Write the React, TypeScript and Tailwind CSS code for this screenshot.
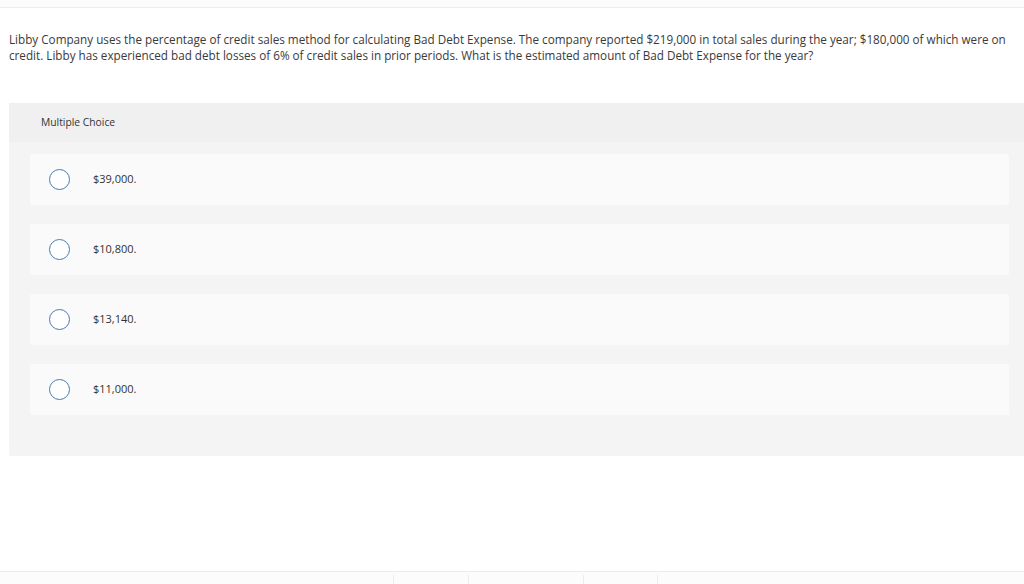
const options = ["$39,000.", "$10,800.", "$13,140.", "$11,000."];

export default function App() {
  return (
    <div
      className="flex h-[584px] w-[1024px] flex-col overflow-hidden bg-white text-[#333]"
      style={{ fontFamily: "'Open Sans', Lato, sans-serif" }}
    >
      {/* top strip */}
      <div className="h-[8px] border-b border-[#ececec] bg-[#fcfcfc]" />

      {/* question */}
      <p className="ml-[9px] mr-[4px] mt-[23px] text-[11.7px] leading-[16px] text-[#3a3a3a]">
        Libby Company uses the percentage of credit sales method for calculating Bad Debt Expense. The company reported $219,000 in total sales during the year; $180,000 of which were on credit. Libby has experienced bad debt losses of 6% of credit sales in prior periods. What is the estimated amount of Bad Debt Expense for the year?
      </p>

      {/* answer panel */}
      <div className="ml-[9px] mt-[40px] flex h-[353px] flex-col rounded-l-[2px] bg-[#f4f4f4]">
        <div className="flex h-[39px] items-center bg-[#f0f0f0] pl-[32px] text-[10.3px] text-[#333]">
          Multiple Choice
        </div>
        <div className="mt-[12px] flex flex-col gap-[19px] pl-[21px] pr-[15px]">
          {options.map((opt) => (
            <div
              key={opt}
              className="flex h-[51px] items-center rounded-[2px] bg-[#fafafa] pl-[19px]"
            >
              <span className="h-[21px] w-[21px] rounded-full border border-[#4a7ab0] bg-white" />
              <span className="ml-[23px] text-[11px] text-[#333]">{opt}</span>
            </div>
          ))}
        </div>
      </div>

      <div className="flex-1" />

      {/* bottom bar */}
      <div className="flex h-[13px] border-t border-[#ececec] bg-[#fcfcfc] pt-[3px]">
        <div className="w-[393px]" />
        <div className="w-[75px] border-l border-[#ececec]" />
        <div className="w-[115px] border-l border-[#ececec]" />
        <div className="w-[74px] border-l border-[#ececec]" />
        <div className="border-l border-[#ececec]" />
      </div>
    </div>
  );
}
